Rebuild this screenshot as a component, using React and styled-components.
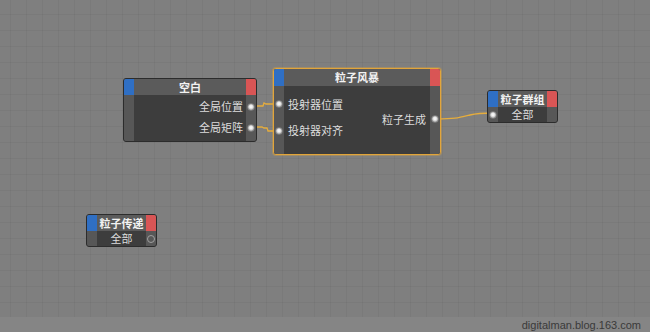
import React from 'react'
import styled, { createGlobalStyle } from 'styled-components'

const Global = createGlobalStyle`
  html, body { margin: 0; padding: 0; background: #7f7f7f; }
  body { font-family: "Noto Sans CJK SC", "Noto Sans", sans-serif; }
`

const Page = styled.div`
  width: 650px;
  height: 332px;
  display: flex;
  flex-direction: column;
  overflow: hidden;
`
const Canvas = styled.div`
  position: relative;
  flex: 1;
  background-color: #7f7f7f;
  background-image:
    linear-gradient(to bottom, rgba(0, 0, 0, 0.04) 1px, transparent 1px),
    linear-gradient(to right, rgba(0, 0, 0, 0.04) 1px, transparent 1px);
  background-size: 16px 16px;
  background-position: 0 14px, 10px 0;
`
const Footer = styled.div`
  height: 15px;
  background: #858585;
  display: flex;
  justify-content: flex-end;
  align-items: center;
  padding-right: 9px;
  font-family: "Liberation Sans", sans-serif;
  font-size: 11px;
  color: #3a3a3a;
`
const Wires = styled.svg`
  position: absolute;
  left: 0;
  top: 0;
  pointer-events: none;
`
const Node = styled.div`
  position: absolute;
  box-sizing: border-box;
  display: flex;
  flex-direction: column;
  border: 1px solid ${p => (p.selected ? '#e2a53a' : '#2c2c2c')};
  border-radius: 3px;
  overflow: hidden;
  background: #3d3d3d;
  box-shadow: ${p => (p.selected ? '0 0 0 1px rgba(226,165,58,0.35)' : 'none')};
`
const Header = styled.div`
  display: flex;
  height: 16px;
  background: #5b5b5b;
`
const Tab = styled.div`
  width: 10px;
  background: ${p => p.color};
`
const Title = styled.div`
  flex: 1;
  text-align: center;
  color: #f2f2f2;
  font-size: 11px;
  font-weight: bold;
  line-height: 16px;
`
const Body = styled.div`
  flex: 1;
  display: flex;
`
const Strip = styled.div`
  width: 10px;
  background: #575757;
  display: flex;
  flex-direction: column;
  align-items: center;
`
const Content = styled.div`
  flex: 1;
  display: flex;
  flex-direction: column;
  color: #dcdcdc;
  font-size: 11px;
`
const Label = styled.div`
  height: ${p => p.h || 21}px;
  line-height: ${p => p.h || 21}px;
  text-align: ${p => p.align || 'left'};
  padding: 0 ${p => p.pad || 4}px;
`
const PortRow = styled.div`
  height: ${p => p.h || 21}px;
  display: flex;
  align-items: center;
  justify-content: center;
`
const Port = styled.div`
  width: 8px;
  height: 8px;
  border-radius: 50%;
  box-sizing: border-box;
  background: ${p => (p.hollow ? 'transparent' : 'radial-gradient(circle at 50% 45%, #f4f4f4 0 25%, #a9a9a9 75%)')};
  border: 1px solid ${p => (p.hollow ? '#a0a0a0' : '#7a7a7a')};
`

export default function App() {
  return (
    <Page>
      <Global />
      <Canvas>
        <Wires width="650" height="317">
          <path d="M253 106 L263 106 L264 103 L266 104 L268 104 L280 104" stroke="#e6ad3c" strokeWidth="1.3" fill="none" />
          <path d="M253 127 L262 127 L264 128 L267 128 L268 131 L280 131" stroke="#e6ad3c" strokeWidth="1.3" fill="none" />
          <path d="M437 119 C455 119 458 118 470 115 C478 113 484 113 493 113" stroke="#e6ad3c" strokeWidth="1.3" fill="none" />
        </Wires>

        <Node style={{ left: 123, top: 78, width: 134, height: 64 }}>
          <Header>
            <Tab color="#2f6fc4" />
            <Title>空白</Title>
            <Tab color="#d95555" />
          </Header>
          <Body>
            <Strip />
            <Content>
              <Label align="right" pad={3} style={{ marginTop: 1 }}>全局位置</Label>
              <Label align="right" pad={3}>全局矩阵</Label>
            </Content>
            <Strip>
              <PortRow style={{ marginTop: 1 }}><Port /></PortRow>
              <PortRow><Port /></PortRow>
            </Strip>
          </Body>
        </Node>

        <Node selected style={{ left: 273, top: 68, width: 168, height: 87 }}>
          <Header style={{ height: 17 }}>
            <Tab color="#2f6fc4" />
            <Title style={{ lineHeight: '17px' }}>粒子风暴</Title>
            <Tab color="#d95555" />
          </Header>
          <Body>
            <Strip>
              <PortRow h={26} style={{ marginTop: 5 }}><Port /></PortRow>
              <PortRow h={27}><Port /></PortRow>
            </Strip>
            <Content>
              <Label h={26} pad={4} style={{ marginTop: 5 }}>投射器位置</Label>
              <Label h={27} pad={4}>投射器对齐</Label>
            </Content>
            <Content>
              <Label h={22} align="right" pad={4} style={{ marginTop: 22 }}>粒子生成</Label>
            </Content>
            <Strip>
              <PortRow h={22} style={{ marginTop: 22 }}><Port /></PortRow>
            </Strip>
          </Body>
        </Node>

        <Node style={{ left: 487, top: 90, width: 71, height: 33 }}>
          <Header>
            <Tab color="#2f6fc4" />
            <Title>粒子群组</Title>
            <Tab color="#d95555" />
          </Header>
          <Body>
            <Strip>
              <PortRow h={15}><Port /></PortRow>
            </Strip>
            <Content>
              <Label h={15} align="center" pad={0}>全部</Label>
            </Content>
            <Strip />
          </Body>
        </Node>

        <Node style={{ left: 86, top: 214, width: 71, height: 33 }}>
          <Header>
            <Tab color="#2f6fc4" />
            <Title>粒子传递</Title>
            <Tab color="#d95555" />
          </Header>
          <Body>
            <Strip />
            <Content>
              <Label h={15} align="center" pad={0}>全部</Label>
            </Content>
            <Strip>
              <PortRow h={15}><Port hollow /></PortRow>
            </Strip>
          </Body>
        </Node>
      </Canvas>
      <Footer>digitalman.blog.163.com</Footer>
    </Page>
  )
}
